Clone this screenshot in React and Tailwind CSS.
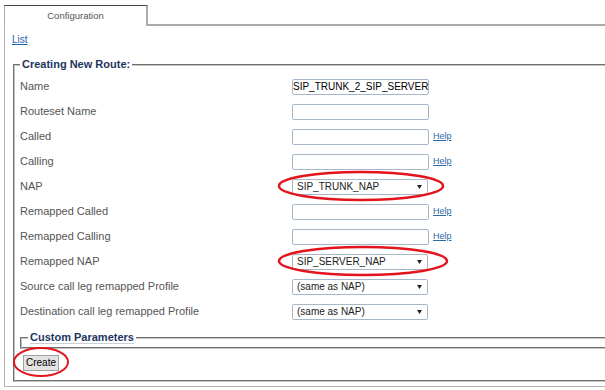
import React from 'react';

const rows = [
  { label: 'Name', type: 'input', value: 'SIP_TRUNK_2_SIP_SERVER' },
  { label: 'Routeset Name', type: 'input' },
  { label: 'Called', type: 'input', help: true },
  { label: 'Calling', type: 'input', help: true },
  { label: 'NAP', type: 'select', value: 'SIP_TRUNK_NAP' },
  { label: 'Remapped Called', type: 'input', help: true },
  { label: 'Remapped Calling', type: 'input', help: true },
  { label: 'Remapped NAP', type: 'select', value: 'SIP_SERVER_NAP' },
  { label: 'Source call leg remapped Profile', type: 'select', value: '(same as NAP)' },
  { label: 'Destination call leg remapped Profile', type: 'select', value: '(same as NAP)' },
];

function Field({ row }) {
  if (row.type === 'select') {
    return (
      <div className="w-[136px] h-[16px] border border-[#a7b6c8] rounded-[2px] flex items-center justify-between pl-[4px] pr-[5px] text-[10px] text-[#222] bg-white">
        <span>{row.value}</span>
        <svg width="5" height="4" viewBox="0 0 5 4">
          <path d="M0 0 L5 0 L2.5 4 Z" fill="#222" />
        </svg>
      </div>
    );
  }
  return (
    <input
      readOnly
      defaultValue={row.value || ''}
      className="w-[137px] h-[16px] border border-[#a7b6c8] rounded-[2px] px-0 text-[10px] text-black bg-white outline-none"
    />
  );
}

export default function App() {
  return (
    <div className="relative w-[605px] h-[390px] overflow-hidden bg-white font-['Liberation_Sans',Arial,sans-serif]">
      {/* Tabs */}
      <div className="flex pt-[5px] pl-[4px] w-[800px]">
        <div className="w-[144px] h-[21px] border-t border-l border-r-2 border-t-[#444] border-l-[#aaa] border-r-[#aaa] flex items-center justify-center text-[9.5px] text-[#555]">
          Configuration
        </div>
        <div className="flex-1 h-[21px] border-b-2 border-[#aaa]" />
      </div>

      {/* Panel */}
      <div className="ml-[4px] w-[700px] h-[361px] border-l border-b border-[#b5b5b5] pl-[8px]">
        <div className="pt-[6px] -ml-px leading-[12px]">
          <a href="#" className="text-[10px] text-[#1a5ea8] underline">List</a>
        </div>

        <fieldset className="mt-[12px] w-[700px] border-2 [border-style:groove] border-[#c4c4c4] pl-[5px] pt-[3px] pb-[7px]">
          <legend className="ml-0 px-[2px] text-[11px] leading-[13px] font-bold text-[#1d3461]">Creating New Route:</legend>
          {rows.map((row) => (
            <div key={row.label} className="flex items-center h-[25px]">
              <div className="w-[272px] text-[11px] text-[#555]">{row.label}</div>
              <Field row={row} />
              {row.help && (
                <a href="#" className="ml-[4px] text-[9px] text-[#2c6aa8] underline">Help</a>
              )}
            </div>
          ))}

          <fieldset className="mt-[7px] border-2 [border-style:groove] border-[#c4c4c4] pl-[6px] pb-[3px]">
            <legend className="px-[2px] text-[11px] leading-[13px] font-bold text-[#1d3461] underline decoration-[#c9ced8] underline-offset-[2px]">Custom Parameters</legend>
          </fieldset>

          <button className="mt-[1px] ml-[3px] h-[16px] px-[2px] border border-[#a0a0a0] bg-[#e3e3e3] text-[10px] leading-[14px] text-black">
            Create
          </button>
        </fieldset>
      </div>

      {/* Red annotation ellipses */}
      <svg className="absolute inset-0 pointer-events-none" width="605" height="390">
        <ellipse cx="361" cy="186" rx="82" ry="14" fill="none" stroke="#e3141c" strokeWidth="2.5" />
        <ellipse cx="363" cy="261" rx="84" ry="14" fill="none" stroke="#e3141c" strokeWidth="2.5" />
        <ellipse cx="41" cy="362" rx="27" ry="14" fill="none" stroke="#e3141c" strokeWidth="2" />
      </svg>
    </div>
  );
}
